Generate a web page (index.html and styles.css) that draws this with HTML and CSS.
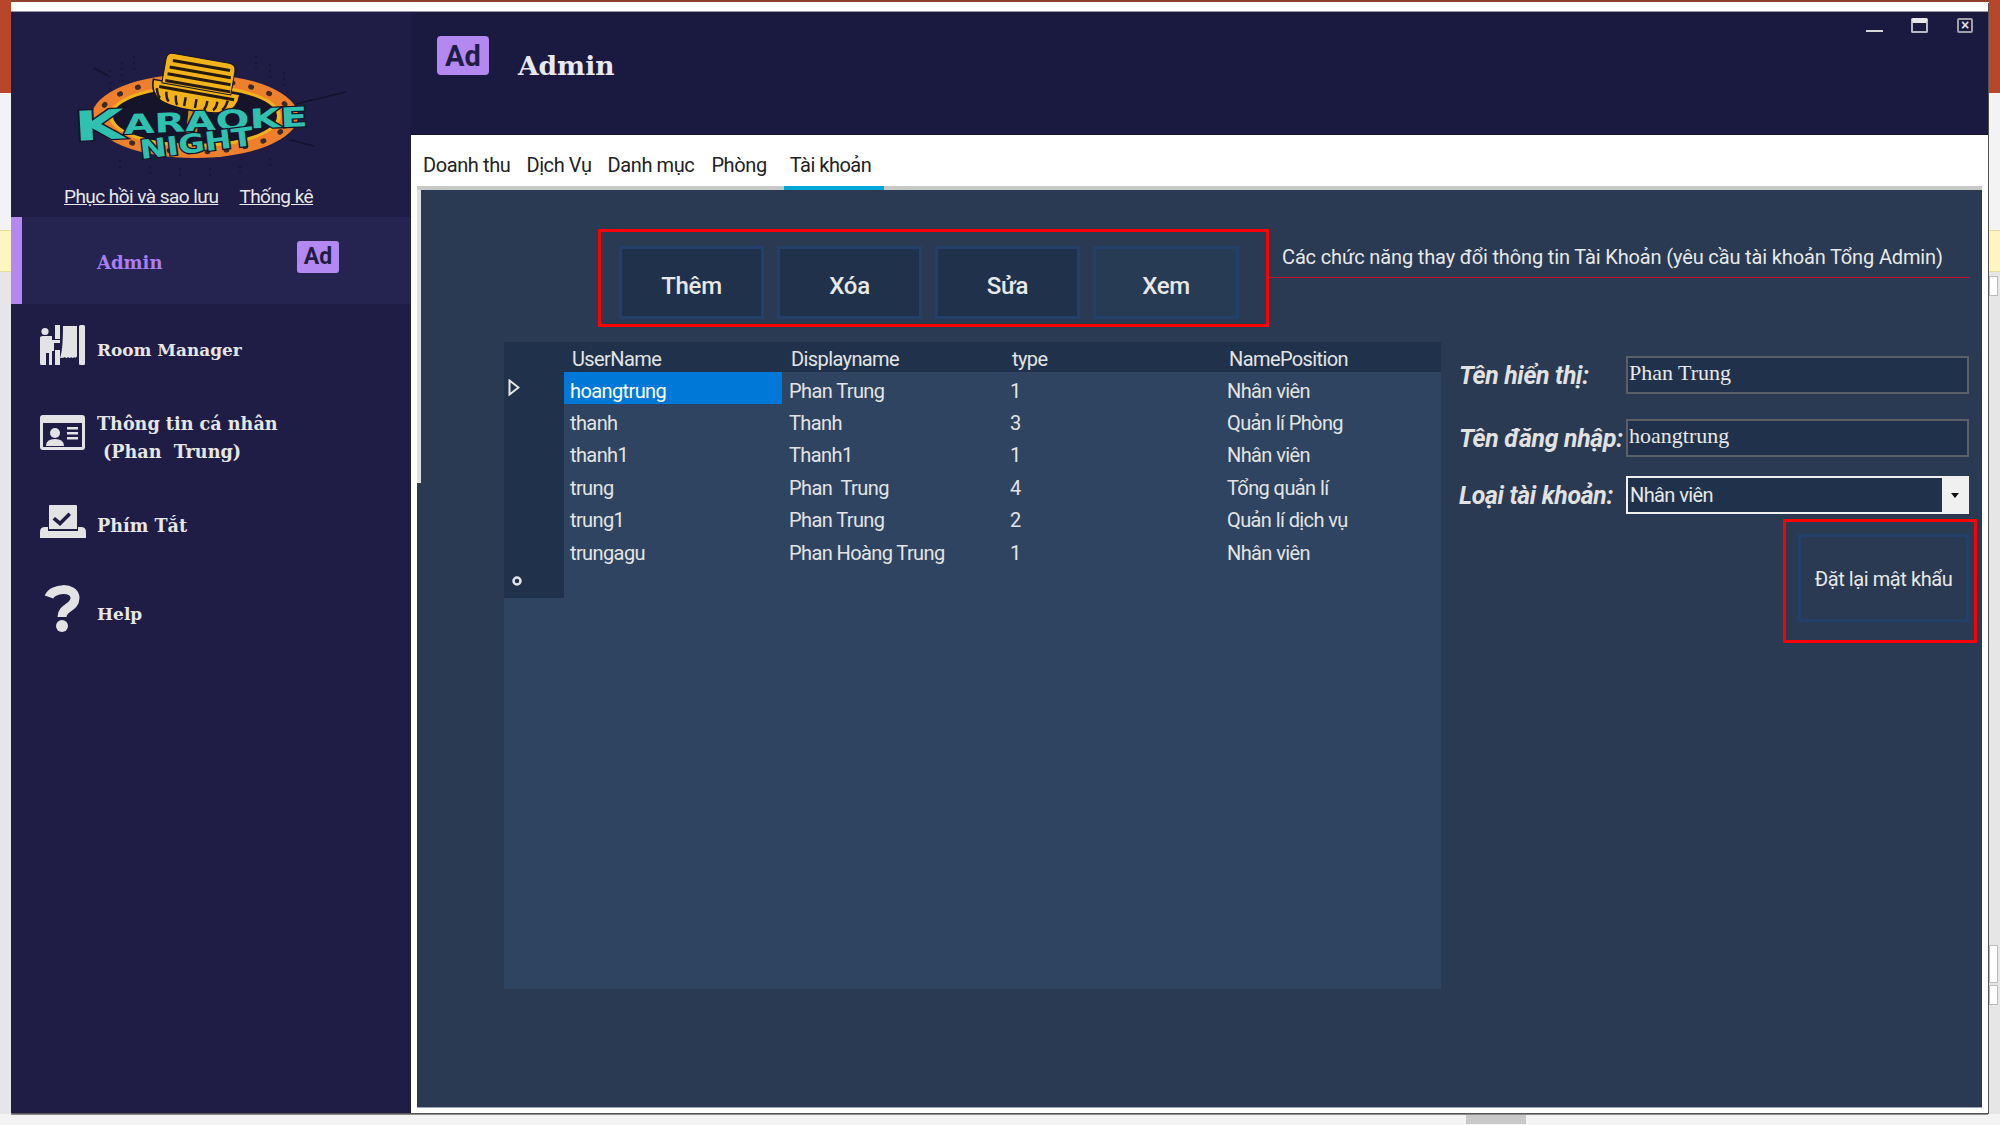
FILE: index.html
```html
<!DOCTYPE html>
<html lang="vi"><head>
<meta charset="utf-8">
<title>Karaoke Night - Admin</title>
<link rel="stylesheet" href="styles.css">
</head>
<body>
<div class="desk">
  <div class="desk-top"></div>
  <div class="desk-strip left"><i class="orange"></i><i class="pale"></i><i class="yellow"></i></div>
  <div class="desk-strip right"><i class="orange"></i><i class="pale"></i><i class="yellow"></i><i class="box b1"></i><i class="box b2"></i><i class="box b3"></i></div>
  <div class="desk-bottom"><i class="taskbtn"></i></div>

  <div class="window">
    <div class="window-top"></div>
    <div class="window-body">
      <aside class="sidebar">
        <svg class="logo" viewBox="11 12 400 170" width="400" height="170">
          <g stroke="#14132e" stroke-width="2" stroke-dasharray="2 4" opacity=".6">
            <path d="M110 70v20M122 62v20M134 56v16M256 56v18M270 64v18M284 72v18M120 160v8M150 166v10M180 168v10M210 168v10M240 166v10M270 158v10"/>
          </g>
          <path d="M108 76l-14-8M296 104l50-12M290 140l24 6" stroke="#14132e" stroke-width="1.5"/>
          <ellipse cx="195" cy="116" rx="103" ry="42" fill="#ee7f2c"/>
          <ellipse cx="195" cy="116" rx="95" ry="36" fill="none" stroke="#3b2a25" stroke-width="5" stroke-dasharray="1 18" stroke-linecap="round"/>
          <ellipse cx="195" cy="116" rx="86" ry="31" fill="#f2b21a"/>
          <ellipse cx="195" cy="116" rx="82" ry="28" fill="#15142a"/>
          <g transform="translate(2 3) rotate(10 195 82)">
            <path d="M190 100h12l2 32h-12z" fill="#c98f12" stroke="#15142a"/>
            <path d="M151 84c0 20 14 24 44 24s44-4 44-24z" fill="#f2b31a" stroke="#15142a" stroke-width="1.500"/>
            <path d="M160 62q0-7 7-7h56q7 0 7 7v24h-70z" fill="#f2b31a" stroke="#15142a"/>
            <path d="M167 62h58M165 69h62M164 76h64M163 83h66M158 90h76" stroke="#241a10" stroke-width="3"/>
            <path d="M156 92q2 8 5 9M166 94q1 7 4 9M176 96q1 7 3 9M186 96v9M197 96v9M208 96q0 7-2 9M218 95q0 7-3 9M228 92q-1 8-4 10" stroke="#241a10" stroke-width="2.500" fill="none"/>
          </g>
          <g class="logo-text">
            <text transform="translate(75 141) rotate(-3)" font-size="41" textLength="50" lengthAdjust="spacingAndGlyphs">K</text>
            <text transform="translate(124 134) rotate(-2.500)" font-size="27" textLength="184" lengthAdjust="spacingAndGlyphs">ARAOKE</text>
            <text transform="translate(141 159) rotate(-7)" font-size="26" textLength="114" lengthAdjust="spacingAndGlyphs">NIGHT</text>
          </g>
        </svg>
        <div class="side-links"><a>Phục hồi và sao lưu</a><a>Thống kê</a></div>
        <div class="side-admin">
          <span>Admin</span>
          <b class="ad">Ad</b>
        </div>
        <nav>
          <div class="nav-item i1">
            <svg viewBox="0 0 45 40" width="45" height="40">
              <circle cx="5" cy="6.500" r="3.600"/>
              <path d="M0 13q0-2 3-2h9v4h8v3H14v8h-2v14h-3V28H6v12H1q-1 0-1-2z"/>
              <path d="M15 0h5v14h-5zM15 25h5v15h-5z"/>
              <path d="M23 1h14v30q-1 3-3 1-1 2-3 0-1 2-3 0-2 2-3 0-1 1-5 1 3-8 3-32z"/>
              <rect x="39" y="0" width="6" height="40" rx="1.500"/>
            </svg>
            <span>Room Manager</span>
          </div>
          <div class="nav-item i2">
            <svg viewBox="0 0 45 35" width="45" height="35">
              <path fill-rule="evenodd" d="M3 0h39q3 0 3 3v29q0 3-3 3H3q-3 0-3-3V3q0-3 3-3zM3 8v24h39V8z"/>
              <circle cx="15" cy="18" r="5"/>
              <path d="M6 31q0-7 9-7t9 7zM27 12h11v2.500H27zM27 17h11v2.500H27zM27 22h11v2.500H27z"/>
            </svg>
            <span>Thông tin cá nhân<br><em>(Phan  Trung)</em></span>
          </div>
          <div class="nav-item i3">
            <svg viewBox="0 0 46 33" width="46" height="33">
              <path fill-rule="evenodd" d="M10 0h26q1 0 1 1v23H9V1q0-1 1-1zM15 12l-2.500 2.500L20 21l11-11-2.500-2.500L20 16z"/>
              <path d="M0 33v-6q0-5 5-5h3v4h30v-4h3q5 0 5 5v6z"/>
            </svg>
            <span>Phím Tắt</span>
          </div>
          <div class="nav-item i4">
            <svg viewBox="0 0 45 47" width="45" height="47">
              <path d="M9 12C12 3 35 1 35 13c0 10-13 9-13 19" fill="none" stroke="#e3e3e3" stroke-width="9"/>
              <circle cx="22" cy="41" r="6"/>
            </svg>
            <span>Help</span>
          </div>
        </nav>
      </aside>

      <main class="main">
        <header class="head">
          <b class="ad big">Ad</b>
          <h1>Admin</h1>
          <div class="win-btns">
            <i class="w-min"></i><i class="w-max"></i><i class="w-close">×</i>
          </div>
        </header>

        <div class="tabs">
          <span>Doanh thu</span><span>Dịch Vụ</span><span>Danh mục</span><span class="t4">Phòng</span><span class="active">Tài khoản</span>
        </div>

        <section class="panel">
          <div class="tools">
            <div class="redbox btn-group">
              <button class="btn">Thêm</button>
              <button class="btn">Xóa</button>
              <button class="btn">Sửa</button>
              <button class="btn last">Xem</button>
            </div>
            <div class="caption">Các chức năng thay đổi thông tin Tài Khoản (yêu cầu tài khoản Tổng Admin)</div>
          </div>

          <div class="work">
            <div class="grid">
              <table>
                <thead><tr><th class="rh"></th><th class="c1">UserName</th><th class="c2">Displayname</th><th class="c3">type</th><th class="c4">NamePosition</th></tr></thead>
                <tbody>
                  <tr><td class="rh"><svg class="cur" viewBox="0 0 12 17" width="12" height="17"><path d="M1.500 1.500l9 7-9 7z" fill="none" stroke="#e6e6e6" stroke-width="2"/></svg></td><td class="sel">hoangtrung</td><td>Phan Trung</td><td>1</td><td>Nhân viên</td></tr>
                  <tr><td class="rh"></td><td>thanh</td><td>Thanh</td><td>3</td><td>Quản lí Phòng</td></tr>
                  <tr><td class="rh"></td><td>thanh1</td><td>Thanh1</td><td>1</td><td>Nhân viên</td></tr>
                  <tr class="tall"><td class="rh"></td><td>trung</td><td>Phan  Trung</td><td>4</td><td>Tổng quản lí</td></tr>
                  <tr><td class="rh"></td><td>trung1</td><td>Phan Trung</td><td>2</td><td>Quản lí dịch vụ</td></tr>
                  <tr class="tall"><td class="rh"></td><td>trungagu</td><td>Phan Hoàng Trung</td><td>1</td><td>Nhân viên</td></tr>
                  <tr><td class="rh"><svg class="star" viewBox="0 0 12 12" width="12" height="12"><circle cx="6" cy="6" r="3.500" fill="#20324b" stroke="#e6e6e6" stroke-width="2.500"/></svg></td><td></td><td></td><td></td><td></td></tr>
                </tbody>
              </table>
            </div>

            <form class="form" onsubmit="return false;">
              <div class="field f1"><label>Tên hiển thị:</label><input type="text" value="Phan Trung"></div>
              <div class="field f2"><label>Tên đăng nhập:</label><input type="text" value="hoangtrung"></div>
              <div class="field f3"><label>Loại tài khoản:</label>
                <div class="combo"><span>Nhân viên</span><i></i></div>
              </div>
              <div class="redbox reset-box"><button class="btn reset">Đặt lại mật khẩu</button></div>
            </form>
          </div>
        </section>
      </main>
    </div>
  </div>
</div>
</body></html>
```

FILE: styles.css
```css
html, body { margin: 0; padding: 0; }
body { font-family: Roboto, "Noto Sans", sans-serif; }
.desk { position: relative; width: 2000px; height: 1125px; background: #e6e6e6; overflow: hidden; }
.desk-top { height: 2px; background: #8f3f2b; }
.desk-strip { position: absolute; top: 0; display: flex; flex-direction: column; }
.desk-strip.left { left: 0; width: 11px; }
.desk-strip.right { right: 0; width: 11px; }
.desk-strip i { display: block; }
.desk-strip .orange { height: 93px; background: #b8472a; }
.desk-strip .pale { height: 137px; background: #f3f3f3; }
.desk-strip .yellow { height: 42px; background: #fdf6c0; border: solid #e8dc9a; border-width: 1px 0; box-sizing: border-box; }
.desk-strip .box { background: #fff; border: 1px solid #bbb; box-sizing: border-box; width: 9px; }
.desk-strip .b1 { height: 20px; margin-top: 4px; }
.desk-strip .b2 { height: 38px; margin-top: 649px; }
.desk-strip .b3 { height: 20px; margin-top: 2px; }
.desk-bottom { position: absolute; left: 0; right: 0; bottom: 0; height: 11px; background: #f3f3f3; }
.taskbtn { position: absolute; left: 1466px; top: 0; width: 60px; height: 10px; background: #c8c8c8; }

.window { position: absolute; left: 11px; top: 2px; width: 1977px; height: 1111px; display: flex; flex-direction: column; background: #fff; box-shadow: 1px 1px 0 #555, 0 2px 0 #8a8a8a; }
.window-top { height: 9px; background: #fff; border-bottom: 1px solid #9a9aa6; }
.window-body { flex: 1; display: flex; min-height: 0; }

.sidebar { width: 400px; background: #1f1d45; color: #e4e4e4; display: flex; flex-direction: column; }
.logo { display: block; flex: none; }
.logo-text text { font-family: "DejaVu Sans", sans-serif; font-weight: bold; fill: #2fc0b0; stroke: #15142a; stroke-width: 2.5; paint-order: stroke; }
.side-links { height: 35px; display: flex; gap: 21px; padding-left: 53px; font-size: 19px; letter-spacing: -.55px; color: #e8e8e8; align-items: flex-start; padding-top: 3px; box-sizing: border-box; }
.side-links a { text-decoration: underline; }
.side-admin { height: 87px; background: #252350; border-left: 11px solid #b388f0; box-sizing: border-box; display: flex; align-items: center; padding-left: 75px; }
.side-admin span { font: bold 18px "DejaVu Serif", serif; color: #a97ff0; margin-top: 4px; width: 200px; }
.ad { display: inline-flex; align-items: center; justify-content: center; width: 42px; height: 32px; border-radius: 3px; background: #b388f0; color: #1f1d45; font: bold 23px Roboto, sans-serif; margin-top: -8px; }
.ad.big { width: 52px; height: 39px; font-size: 29px; border-radius: 4px; margin: 0; }
.nav-item { display: flex; align-items: center; gap: 12px; padding-left: 29px; font: bold 17.6px/28px "DejaVu Serif", serif; color: #e6e6e6; }
.nav-item svg { fill: #e3e3e3; flex: none; }
.nav-item span { margin-top: 10px; white-space: pre; }
.nav-item em { font-style: normal; margin-left: 6px; }
.i1 { height: 82px; font-size: 16.9px; }
.i2 { height: 93px; }
.i3 { height: 85px; gap: 11px; }
.i3 span { margin-top: 8px; }
.i4 { height: 89px; font-size: 17px; }

.main { flex: 1; min-width: 0; display: flex; flex-direction: column; }
.head { height: 123px; background: #1a1a40; color: #e8e8f0; position: relative; display: flex; align-items: flex-start; padding: 24px 0 0 26px; box-sizing: border-box; border-bottom: 1px solid #14142e; }
.head h1 { font: bold 26.5px "DejaVu Serif", serif; margin: 14px 0 0 29px; }
.win-btns { position: absolute; right: 0; top: 0; }
.win-btns i { position: absolute; display: block; box-sizing: border-box; }
.w-min { right: 105px; top: 18px; width: 17px; height: 2px; background: #d6d6d6; }
.w-max { right: 60px; top: 6px; width: 17px; height: 15px; border: 2px solid #b8b8c0; border-top-width: 5px; border-top-color: #e8e8e8; border-radius: 2px; }
.w-close { right: 15px; top: 6px; width: 16px; height: 15px; border: 2px solid #a0a0a8; border-radius: 2px; color: #e0e0e0; font: bold 14px/11px "Liberation Sans", sans-serif; text-align: center; }

.tabs { height: 55px; margin: 0 6px; padding-left: 6px; box-sizing: border-box; border-bottom: 4px solid #c8c8c8; display: flex; gap: 16px; font-size: 20px; letter-spacing: -.4px; color: #222; }
.tabs span { padding-top: 18px; }
.tabs .t4 { margin-left: 1px; }
.tabs .active { width: 100px; box-sizing: content-box; margin: 0 0 -4px 1px; padding-left: 0; text-indent: 6px; border-bottom: 4px solid #00a8d8; height: 33px; letter-spacing: -.5px; }

.panel { flex: 1; position: relative; margin: 0 6px 5px; background: #293a52; color: #e8e8e8; border-bottom: 1px solid #9aa5b8; }
.panel::before { content: ""; position: absolute; left: 0; top: 0; width: 4px; height: 293px; background: #e0e0e0; }
.tools { display: flex; padding: 39px 0 0 181px; align-items: flex-start; }
.redbox { border: 3px solid #f00; box-sizing: border-box; }
.btn-group { width: 671px; height: 98px; display: flex; gap: 13px; padding: 14px 0 0 18px; }
.btn { background: #20324b; border: 3px solid #22406a; color: #e8e8e8; font: 500 24px Roboto, sans-serif; letter-spacing: -.3px; width: 145px; height: 73px; padding: 6px 0 0; }
.btn.last { background: #283b54; width: 146px; }
.caption { width: 701px; height: 49px; box-sizing: border-box; padding: 16px 0 0 13px; border-bottom: 1px solid #c8102e; font-size: 20px; letter-spacing: -.14px; white-space: nowrap; }

.work { display: flex; padding: 15px 0 0 87px; align-items: flex-start; }
.grid { width: 937px; height: 647px; background: #2e4461; flex: none; }
table { border-collapse: collapse; width: 100%; table-layout: fixed; font-size: 20px; letter-spacing: -.6px; color: #e4e4e4; }
th { height: 30px; padding: 3px 0 0 9px; background: #20324b; font-weight: 400; text-align: left; box-sizing: border-box; }
td { height: 32px; padding: 5px 0 0 7px; box-sizing: border-box; white-space: pre; }
tr.tall td { height: 33px; padding-top: 6px; }
th.rh, td.rh { width: 60px; padding: 0; background: #20324b; position: relative; }
th.c1 { width: 218px; padding-left: 8px; }
th.c2 { width: 221px; }
th.c3 { width: 216px; padding-left: 9px; }
th.c4 { padding-left: 10px; }
td:nth-child(2) { padding-left: 6px; }
td:nth-child(5) { padding-left: 8px; }
td.sel { background: #0078d7; color: #fff; }
.cur { position: absolute; left: 4px; top: 7px; }
.star { position: absolute; left: 7px; top: 9px; }

.form { width: 516px; margin-left: 20px; flex: none; }
.field { display: flex; align-items: center; padding-right: 8px; }
.field label { width: 165px; flex: none; font: italic 700 24.8px Roboto, sans-serif; letter-spacing: -.3px; color: #e2e2e2; white-space: nowrap; margin-left: -2px; margin-right: 2px; }
.field input { flex: 1; min-width: 0; height: 38px; box-sizing: border-box; background: #20324b; border: 2px solid #5a5f68; color: #e8e8e8; font: 22px "Liberation Serif", serif; padding: 0 0 4px 1px; outline: 0; }
.f1 { margin-top: 14px; }
.f2 { margin-top: 25px; }
.f3 { margin-top: 19px; }
.combo { flex: 1; height: 38px; box-sizing: border-box; border: 2px solid #f0f0f0; background: #20324b; display: flex; font-size: 20px; letter-spacing: -.6px; }
.combo span { flex: 1; padding: 5px 0 0 2px; }
.combo i { width: 25px; background: #f0f0f0; position: relative; }
.combo i::after { content: ""; position: absolute; left: 9px; top: 15px; border: 4px solid transparent; border-top: 5px solid #111; border-bottom: 0; }
.reset-box { width: 194px; height: 124px; margin: 5px 0 0 auto; padding: 12px 5px 0 12px; }
.btn.reset { width: 171px; height: 88px; background: #293a52; font-size: 20px; font-weight: 400; letter-spacing: -.42px; padding-top: 2px; }
```
